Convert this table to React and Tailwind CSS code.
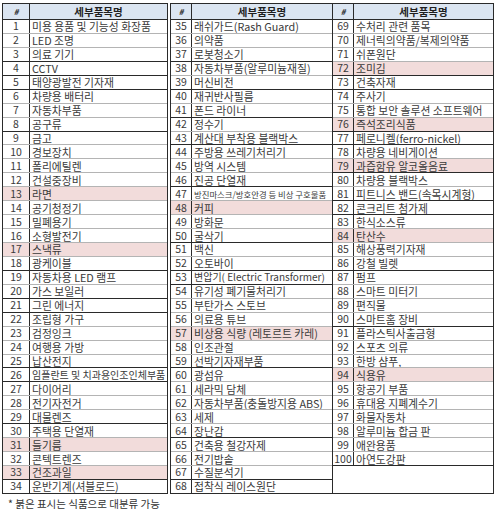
import React from 'react';

const groups = [
  {
    numW: 'w-[27px]',
    width: 'w-[166px]',
    dark: [3, 4, 5, 8, 18, 20, 21, 25, 26, 29, 33],
    rows: [
      '미용 용품 및 기능성 화장품', 'LED 조명', '의료 기기', 'CCTV', '태양광발전 기자재', '차량용 배터리', '자동차부품', '공구류',
      '금고', '경보장치', '폴리에틸렌', '건설중장비', '라면', '공기청정기', '밀폐용기', '소형발전기', '스낵류',
      '광케이블', '자동차용 LED 램프', '가스 보일러', '그린 에너지', '조립형 가구', '검정잉크', '여행용 가방', '납산전지',
      '임플란트 및 치과용인조인체부품', '다이어리', '전기자전거', '대물렌즈', '주택용 단열재', '들기름', '콘텍트렌즈', '건조과일', '운반기계(셔블로드)',
    ],
    start: 1,
  },
  {
    numW: 'w-[21px]',
    width: 'w-[163px]',
    dark: [37, 39, 41, 43, 46, 50, 52, 53, 59, 64, 67],
    rows: [
      '래쉬가드(Rash Guard)', '의약품', '로봇청소기', '자동차부품(알루미늄재질)', '머신비전', '재귀반사필름', '폰드 라이너', '정수기',
      '계산대 부착용 블랙박스', '주방용 쓰레기처리기', '방역 시스템', '진공 단열재', '방진마스크/방호안경 등 비상 구호물품', '커피', '방화문', '굴삭기', '백신',
      '오토바이', '변압기( Electric Transformer)', '유기성 폐기물처리기', '부탄가스 스토브', '의료용 튜브', '비상용 식량 (레토르트 카레)', '인조관절', '선박기자재부품',
      '광섬유', '세라믹 담체', '자동차부품(충돌방지용 ABS)', '세제', '장난감', '건축용 철강자제', '전기밥솥', '수질분석기', '접착식 레이스원단',
    ],
    start: 35,
  },
  {
    numW: 'w-[21px]',
    width: 'w-[162px]',
    dark: [72, 73, 76, 77, 79, 81, 82, 86, 90, 100],
    rows: [
      '수처리 관련 품목', '제너릭의약품/복제의약품', '쉬폰원단', '조미김', '건축자재', '주사기', '통합 보안 솔루션 소프트웨어', '즉석조리식품',
      '페로니켈(ferro-nickel)', '차량용 네비게이션', '과즙함유 알코올음료', '차량용 블랙박스', '피트니스 밴드(속목시계형)', '콘크리트 첨가제', '한식소스류', '탄산수', '해상풍력기자재',
      '강철 빌렛', '펌프', '스마트 미터기', '편직물', '스마트홈 장비', '플라스틱사출금형', '스포츠 의류', '한방 샴푸,',
      '식용유', '항공기 부품', '휴대용 지폐계수기', '화물자동차', '알루미늄 합금 판', '애완용품', '아연도강판',
    ],
    start: 69,
  },
];

const pink = [13, 17, 31, 33, 48, 57, 72, 76, 79, 84, 94];

function sizeFor(n) {
  if (n === 47) return 'text-[8.4px]';
  if (n === 26 || n === 53) return 'text-[10px]';
  return 'text-[10.8px]';
}

function Table({ group, extraClass }) {
  return (
    <div className={`flex flex-col border border-[#2a2a2a] ${group.width} ${extraClass}`}>
      <div className="flex h-[15px] bg-[#dbe5f1] text-[#1f1f1f]">
        <div className={`${group.numW} shrink-0 border-r border-[#2a2a2a] flex items-center justify-center text-[8px] leading-[12px] font-bold italic`}>
          #
        </div>
        <div className="flex-1 flex items-center justify-center text-[10.5px] leading-[13px] font-bold">세부품목명</div>
      </div>
      {group.rows.map((name, i) => {
        const n = group.start + i;
        const prevDark = i === 0 || group.dark.includes(n - 1);
        return (
          <div
            key={n}
            className={`flex h-[13.95px] border-t ${prevDark ? 'border-[#2a2a2a]' : 'border-[#b4b4b4]'} ${
              pink.includes(n) ? 'bg-[#f2dcdb]' : 'bg-white'
            }`}
          >
            <div className={`${group.numW} shrink-0 border-r border-[#2a2a2a] flex items-center justify-center text-[10.5px] leading-[12px] text-[#3a3a3a]`}>
              {n}
            </div>
            <div className={`flex-1 flex items-center pl-[2px] whitespace-nowrap text-[#3a3a3a] leading-[12px] ${sizeFor(n)}`}>
              {name}
            </div>
          </div>
        );
      })}
      {group.rows.length < 34 && <div className="h-[27.9px] border-t border-[#2a2a2a] bg-white" />}
    </div>
  );
}

export default function App() {
  return (
    <div
      className="w-[500px] h-[511px] bg-white pt-[3px] pl-[2px]"
      style={{ fontFamily: '"Noto Sans CJK KR", "Noto Sans", sans-serif' }}
    >
      <div className="flex items-start">
        <Table group={groups[0]} extraClass="" />
        <Table group={groups[1]} extraClass="ml-[2px]" />
        <Table group={groups[2]} extraClass="-ml-px" />
      </div>
      <p className="mt-[3px] ml-[6px] text-[10.5px] text-[#333] leading-[13px]">* 붉은 표시는 식품으로 대분류 가능</p>
    </div>
  );
}
